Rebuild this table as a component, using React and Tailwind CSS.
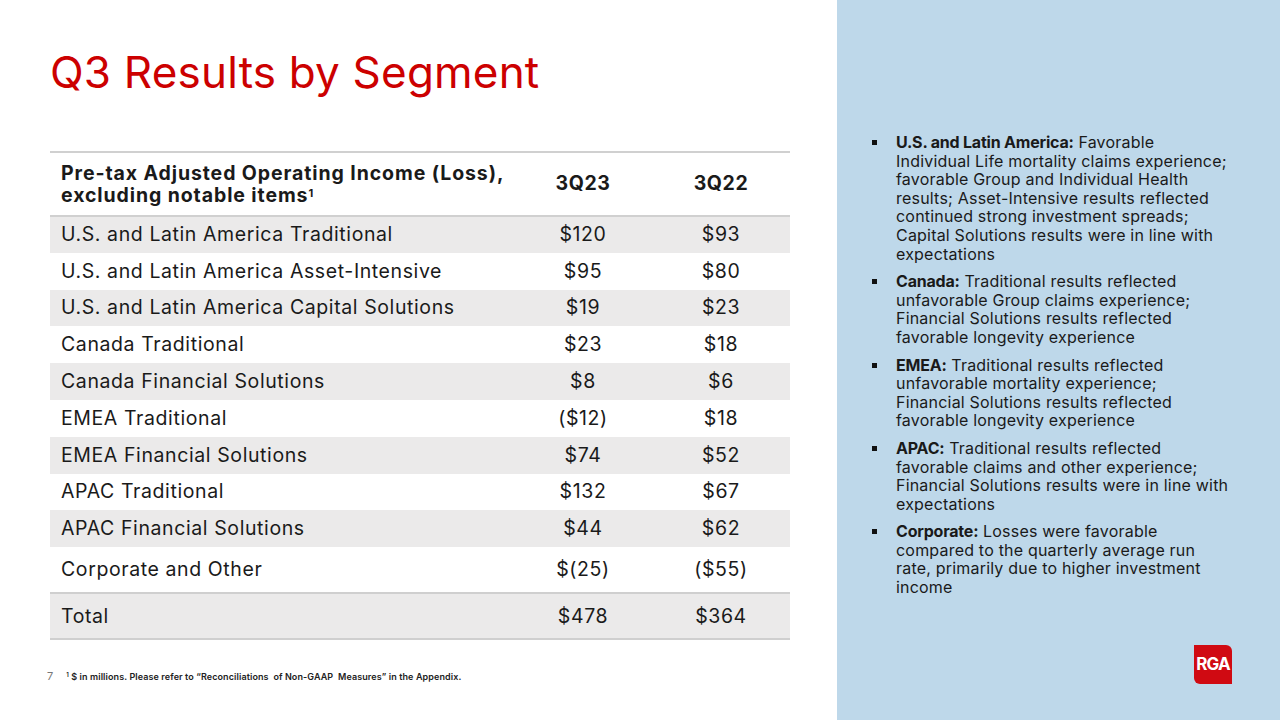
const ROWS = [
  ['U.S. and Latin America Traditional', '$120', '$93'],
  ['U.S. and Latin America Asset-Intensive', '$95', '$80'],
  ['U.S. and Latin America Capital Solutions', '$19', '$23'],
  ['Canada Traditional', '$23', '$18'],
  ['Canada Financial Solutions', '$8', '$6'],
  ['EMEA Traditional', '($12)', '$18'],
  ['EMEA Financial Solutions', '$74', '$52'],
  ['APAC Traditional', '$132', '$67'],
  ['APAC Financial Solutions', '$44', '$62'],
]

// line breaks kept as on the slide
const NOTES = [
  ['U.S. and Latin America:', [' Favorable', 'Individual Life mortality claims experience;', 'favorable Group and Individual Health', 'results; Asset-Intensive results reflected', 'continued strong investment spreads;', 'Capital Solutions results were in line with', 'expectations']],
  ['Canada:', [' Traditional results reflected', 'unfavorable Group claims experience;', 'Financial Solutions results reflected', 'favorable longevity experience']],
  ['EMEA:', [' Traditional results reflected', 'unfavorable mortality experience;', 'Financial Solutions results reflected', 'favorable longevity experience']],
  ['APAC:', [' Traditional results reflected', 'favorable claims and other experience;', 'Financial Solutions results were in line with', 'expectations']],
  ['Corporate:', [' Losses were favorable', 'compared to the quarterly average run', 'rate, primarily due to higher investment', 'income']],
]

function App() {
  return (
    <div className="flex h-[720px] w-[1280px] overflow-hidden bg-white font-['Inter',sans-serif] text-[#1a1a1a]">
      <div className="flex w-[837px] flex-col pl-[50px] pr-[47px]">
        <h1 className="mt-[44px] h-[107px] text-[44px] leading-[56px] tracking-[0.2px] text-[#cc0000]">Q3 Results by Segment</h1>

        <table className="w-[740px] border-collapse text-[19.5px] tracking-[0.6px]">
          <thead>
            <tr className="h-[64px] border-y-2 border-[#d0d0d0]">
              <th className="pl-[11px] text-left text-[19.5px] font-bold leading-[22px] tracking-[0.9px]">
                Pre-tax Adjusted Operating Income (Loss),<br />excluding notable items<sup className="text-[11px]">1</sup>
              </th>
              <th className="w-[138px] text-center font-bold">3Q23</th>
              <th className="w-[138px] text-center font-bold">3Q22</th>
            </tr>
          </thead>
          <tbody>
            {ROWS.map((r, i) => (
              <tr key={r[0]} className={`h-[36.8px] ${i % 2 === 0 ? 'bg-[#ebeaea]' : ''}`}>
                <td className="pl-[11px]">{r[0]}</td>
                <td className="text-center">{r[1]}</td>
                <td className="text-center">{r[2]}</td>
              </tr>
            ))}
            <tr className="h-[46px]">
              <td className="pl-[11px]">Corporate and Other</td>
              <td className="text-center">$(25)</td>
              <td className="text-center">($55)</td>
            </tr>
            <tr className="h-[46px] border-y-2 border-[#cfcfcf] bg-[#ebeaea]">
              <td className="pl-[11px]">Total</td>
              <td className="text-center">$478</td>
              <td className="text-center">$364</td>
            </tr>
          </tbody>
        </table>

        <div className="mt-[28px] flex items-center gap-[13px]">
          <span className="-ml-[3px] text-[11px] text-[#777]">7</span>
          <span className="whitespace-nowrap text-[9px] font-semibold tracking-[0.1px] text-[#222]"><sup className="text-[6px]">1</sup> $ in millions. Please refer to “Reconciliations&nbsp; of Non-GAAP&nbsp; Measures” in the Appendix.</span>
        </div>
      </div>

      <div className="flex flex-1 flex-col bg-[#bed8ea] pl-[35px] pr-[20px] pt-[133px]">
        <ul className="flex flex-col gap-[9px]">
          {NOTES.map(([h, lines]) => (
            <li key={h} className="flex text-[16px] leading-[18.6px] tracking-[0.2px]">
              <span className="mt-[7px] mr-[19px] h-[5px] w-[5px] shrink-0 bg-[#111]" />
              <div className="flex flex-col whitespace-nowrap">
                <span><b className="tracking-[-0.2px]">{h}</b>{lines[0]}</span>
                {lines.slice(1).map((l) => (
                  <span key={l}>{l}</span>
                ))}
              </div>
            </li>
          ))}
        </ul>
        <div className="mt-auto mb-[36px] flex justify-end pr-[28px]">
          <div className="flex h-[39px] w-[38px] items-center justify-center rounded-tr-[6px] rounded-bl-[6px] bg-[#d00a12] text-[17px] font-bold tracking-[-0.8px] text-white">
            RGA
          </div>
        </div>
      </div>
    </div>
  )
}

export default App
